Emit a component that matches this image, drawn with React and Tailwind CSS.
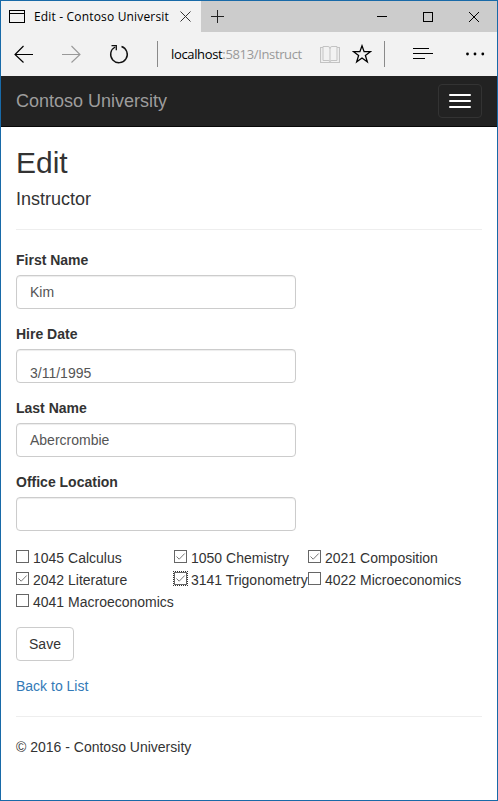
import React from "react";

const fields = [
  { label: "First Name", value: "Kim" },
  { label: "Hire Date", value: "3/11/1995", low: true },
  { label: "Last Name", value: "Abercrombie" },
  { label: "Office Location", value: "" },
];

const courses = [
  { name: "1045 Calculus", checked: false },
  { name: "1050 Chemistry", checked: true },
  { name: "2021 Composition", checked: true },
  { name: "2042 Literature", checked: true },
  { name: "3141 Trigonometry", checked: true, focused: true },
  { name: "4022 Microeconomics", checked: false },
  { name: "4041 Macroeconomics", checked: false },
];

function TitleBar() {
  return (
    <div className="flex h-[31px] shrink-0 bg-[#cccccc]">
      <div className="flex w-[200px] items-center bg-[#f2f2f2] pl-2">
        <svg width="16" height="13" viewBox="0 0 16 13" className="shrink-0" fill="none" stroke="#000" shapeRendering="crispEdges">
          <path d="M.5 .5h15v12H.5zM0 3.5h16" />
        </svg>
        <div className="ml-[9px] w-[136px] shrink-0 overflow-hidden text-[12px] leading-[18px] tracking-[0.17px] whitespace-nowrap text-black">
          Edit - Contoso Universit
        </div>
        <svg width="11" height="11" viewBox="0 0 11 11" className="ml-[10px] shrink-0" fill="none" stroke="#333">
          <path d="M.5 .5l10 10M10.500 .5l-10 10" />
        </svg>
      </div>
      <div className="flex flex-1 items-center pl-[10px]">
        <svg width="13" height="13" viewBox="0 0 13 13" fill="none" stroke="#222" shapeRendering="crispEdges">
          <path d="M6.500 0v13M0 6.500h13" />
        </svg>
        <div className="ml-auto flex items-center gap-9 pr-[18px]">
          <svg width="10" height="10" viewBox="0 0 10 10" stroke="#000" shapeRendering="crispEdges">
            <path d="M0 4.500h10" />
          </svg>
          <svg width="10" height="10" viewBox="0 0 10 10" fill="none" stroke="#000" shapeRendering="crispEdges">
            <path d="M.5 .5h9v9h-9z" />
          </svg>
          <svg width="10" height="10" viewBox="0 0 10 10" stroke="#000">
            <path d="M0 0l10 10M10 0l-10 10" />
          </svg>
        </div>
      </div>
    </div>
  );
}

function Toolbar() {
  return (
    <div className="flex h-11 shrink-0 items-center bg-[#f2f2f2] pl-[13px]">
      <svg width="19" height="18" viewBox="0 0 19 18" className="shrink-0" fill="none" stroke="#000" strokeWidth="1.15">
        <path d="M19 9.500H1M9.500 1L1 9.500L9.500 17.500" />
      </svg>
      <svg width="19" height="18" viewBox="0 0 19 18" className="ml-[29px] shrink-0" fill="none" stroke="#999" strokeWidth="1.1">
        <path d="M0 9.500h18M9.500 1L18 9.500L9.500 17.500" />
      </svg>
      <svg width="20" height="20" viewBox="0 0 20 20" className="ml-[28px] shrink-0" fill="none" stroke="#111" strokeWidth="1.4">
        <path d="M12.500 2.500A8.300 8.300 0 1 1 6.200 3" />
        <path d="M2.500 1.700h4.800v4.600" strokeWidth="1.3" />
      </svg>
      <div className="ml-[28px] h-[26px] w-px shrink-0 bg-[#8a8a8a]" />
      <div className="ml-[13px] w-[134px] shrink-0 overflow-hidden text-[13px] leading-5 tracking-[-0.35px] whitespace-nowrap text-[#999]">
        <span className="text-black">localhost</span>:5813/Instruct
      </div>
      <svg width="20" height="19" viewBox="0 0 20 19" className="ml-[15px] shrink-0" fill="none" stroke="#c3c3c3">
        <path d="M3 1.500h5q2 0 2 2q0-2 2-2h5v14h-5q-2 0-2 1q0-1-2-1H3zM10 3v14" />
        <path d="M3 2.500H.5v15h19v-15H17" strokeWidth="1.2" />
      </svg>
      <svg width="20" height="20" viewBox="0 0 20 20" className="ml-[12px] shrink-0" fill="none" stroke="#000" strokeWidth="1.3">
        <path d="M10 1.800l2.100 5.900h6.300l-5 3.800 1.900 6.300-5.300-3.800-5.300 3.800 1.900-6.300-5-3.800h6.300z" />
      </svg>
      <div className="ml-[12px] h-[26px] w-px shrink-0 bg-[#8a8a8a]" />
      <svg width="20" height="12" viewBox="0 0 20 12" className="ml-[28px] shrink-0" stroke="#000" shapeRendering="crispEdges">
        <path d="M0 .5h16M0 5.500h20M0 10.500h12" />
      </svg>
      <svg width="19" height="4" viewBox="0 0 19 4" className="ml-[33px] shrink-0">
        <circle cx="1.500" cy="2" r="1.400" />
        <circle cx="9" cy="2" r="1.400" />
        <circle cx="16.800" cy="2" r="1.400" />
      </svg>
    </div>
  );
}

function Course({ name, checked, focused }) {
  return (
    <label className="flex h-[22px] items-start whitespace-nowrap">
      <span
        className={
          "mt-1 flex h-[13px] w-[13px] shrink-0 border border-[#666] bg-white" +
          (focused ? " outline-1 outline-dotted outline-[#333]" : "")
        }
      >
        {checked && (
          <svg width="11" height="11" viewBox="0 0 11 11" fill="none" stroke="#777" strokeWidth="1">
            <path d="M1.500 5.500l2.700 2.700L9.700 2.500" />
          </svg>
        )}
      </span>
      <span className="ml-1 mt-[2px] leading-5">{name}</span>
    </label>
  );
}

export default function App() {
  return (
    <div className="flex h-[801px] w-[498px] flex-col overflow-hidden border border-[#186aa8] bg-white font-['Liberation_Sans',Arial,sans-serif] text-[14px] leading-5 text-[#333]">
      <div className="shrink-0 font-['Open_Sans','Noto_Sans',sans-serif]">
        <TitleBar />
        <Toolbar />
      </div>
      <nav className="flex h-[51px] shrink-0 items-center justify-between border-b border-[#080808] bg-[#222] px-[15px]">
        <span className="text-[18px] text-[#9d9d9d]">Contoso University</span>
        <button className="flex h-[34px] w-11 flex-col items-center justify-center gap-1 rounded border border-[#333]">
          <span className="h-[2px] w-[22px] rounded-[1px] bg-white" />
          <span className="h-[2px] w-[22px] rounded-[1px] bg-white" />
          <span className="h-[2px] w-[22px] rounded-[1px] bg-white" />
        </button>
      </nav>
      <main className="px-[15px] pt-[19px]">
        <h2 className="text-[30px] leading-[33px]">Edit</h2>
        <h4 className="mt-[10px] text-[18px] leading-5">Instructor</h4>
        <hr className="mt-5 mb-5 border-[#eee]" />
        {fields.map((f) => (
          <div key={f.label} className="mb-[15px]">
            <div className="mb-[5px] font-bold">{f.label}</div>
            <div
              className={
                "h-[34px] w-[280px] overflow-hidden rounded border border-[#ccc] px-[13px] text-[#555] shadow-[inset_0_1px_1px_rgba(0,0,0,0.075)] " +
                (f.low ? "pt-[13px]" : "pt-[6px]")
              }
            >
              {f.value}
            </div>
          </div>
        ))}
        <div className="grid grid-cols-[158px_134px_174px]">
          {courses.map((c) => (
            <Course key={c.name} {...c} />
          ))}
        </div>
        <button className="mt-[15px] block h-[34px] w-[58px] rounded border border-[#ccc] bg-white text-[#333]">
          Save
        </button>
        <a className="mt-[15px] block text-[#337ab7]">Back to List</a>
        <hr className="my-5 border-[#eee]" />
        <footer>© 2016 - Contoso University</footer>
      </main>
    </div>
  );
}
